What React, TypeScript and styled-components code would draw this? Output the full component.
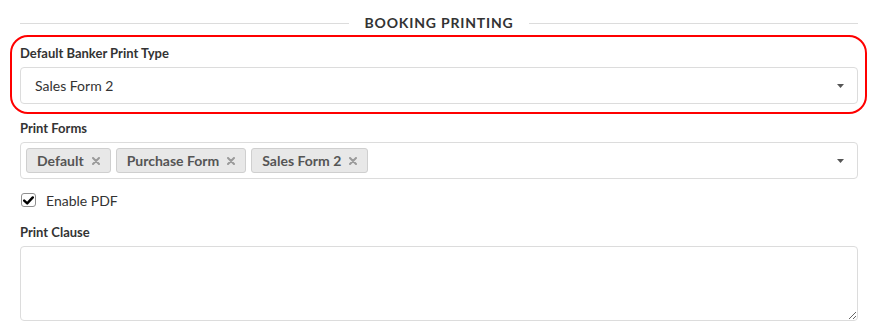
import React from "react";
import styled, { createGlobalStyle } from "styled-components";

const Global = createGlobalStyle`
  html, body { margin: 0; padding: 0; background: #fff; }
  body { font-family: Lato, "Open Sans", Arial, sans-serif; color: #333; }
  * { box-sizing: border-box; }
`;

const Page = styled.div`
  width: 879px;
  padding: 13px 21px 0 20px;
`;

const SectionTitle = styled.div`
  display: flex;
  align-items: center;
  gap: 16px;
  height: 20px;
  margin-bottom: 2px;
`;

const TitleLine = styled.div`
  flex: 1;
  height: 1px;
  background: #dcdcdc;
`;

const TitleText = styled.span`
  font-size: 14px;
  font-weight: 700;
  letter-spacing: 0.8px;
  color: #333;
  line-height: 20px;
  white-space: nowrap;
`;

const Highlight = styled.div`
  margin: 0 -9px 0 -10px;
  padding: 8px 7px 8px 8px;
  border: 2px solid #ff0000;
  border-radius: 18px;
`;

const Field = styled.div<{ $top?: number }>`
  margin-top: ${(p) => p.$top ?? 0}px;
`;

const Label = styled.div`
  font-size: 13px;
  font-weight: 700;
  line-height: 17px;
  color: #333;
  margin-bottom: 5px;
`;

const SelectBox = styled.div`
  display: flex;
  align-items: center;
  height: 37px;
  border: 1px solid #dcdcdc;
  border-radius: 4px;
  background: #fff;
  padding: 0 13px 0 14px;
`;

const SelectValue = styled.span`
  flex: 1;
  font-size: 14px;
  color: #333;
`;

const TagList = styled.div`
  flex: 1;
  display: flex;
  gap: 5px;
  margin-left: -9px;
`;

const Tag = styled.span`
  display: inline-flex;
  align-items: center;
  gap: 8px;
  height: 25px;
  padding: 0 10px 0 10px;
  background: #e8e8e8;
  border: 1px solid #cfcfcf;
  border-radius: 3px;
  font-size: 14px;
  font-weight: 700;
  color: #555;
`;

const Caret = () => (
  <svg width="7" height="4" viewBox="0 0 7 4">
    <path d="M0 0 L7 0 L3.5 4 Z" fill="#555" />
  </svg>
);

const Remove = () => (
  <svg width="8" height="8" viewBox="0 0 8 8">
    <path d="M1 1 L7 7 M7 1 L1 7" stroke="#9a9a9a" strokeWidth="2" strokeLinecap="round" />
  </svg>
);

const CheckRow = styled.label`
  display: flex;
  align-items: center;
  gap: 10px;
  height: 20px;
  margin-top: 11px;
  font-size: 14px;
  color: #333;
`;

const CheckBox = styled.span`
  width: 15px;
  height: 14px;
  border: 1px solid #8f8f8f;
  border-radius: 3px;
  background: #fff;
  display: inline-flex;
  align-items: center;
  justify-content: center;
  margin-left: 1px;
`;

const TextArea = styled.textarea`
  display: block;
  width: 100%;
  height: 75px;
  border: 1px solid #dcdcdc;
  border-radius: 4px;
  resize: vertical;
  font-family: inherit;
  font-size: 14px;
  outline: none;
`;

export default function App() {
  const forms = ["Default", "Purchase Form", "Sales Form 2"];
  return (
    <Page>
      <Global />
      <SectionTitle>
        <TitleLine />
        <TitleText>BOOKING PRINTING</TitleText>
        <TitleLine />
      </SectionTitle>

      <Highlight>
        <Label>Default Banker Print Type</Label>
        <SelectBox>
          <SelectValue>Sales Form 2</SelectValue>
          <Caret />
        </SelectBox>
      </Highlight>

      <Field $top={6}>
        <Label>Print Forms</Label>
        <SelectBox>
          <TagList>
            {forms.map((f) => (
              <Tag key={f}>
                {f}
                <Remove />
              </Tag>
            ))}
          </TagList>
          <Caret />
        </SelectBox>
      </Field>

      <CheckRow>
        <CheckBox>
          <svg width="11" height="9" viewBox="0 0 11 9">
            <path d="M1.2 4.6 L4.2 7.4 L9.8 1.4" stroke="#000" strokeWidth="2.4" fill="none" strokeLinecap="round" strokeLinejoin="round" />
          </svg>
        </CheckBox>
        Enable PDF
      </CheckRow>

      <Field $top={14}>
        <Label>Print Clause</Label>
        <TextArea />
      </Field>
    </Page>
  );
}
